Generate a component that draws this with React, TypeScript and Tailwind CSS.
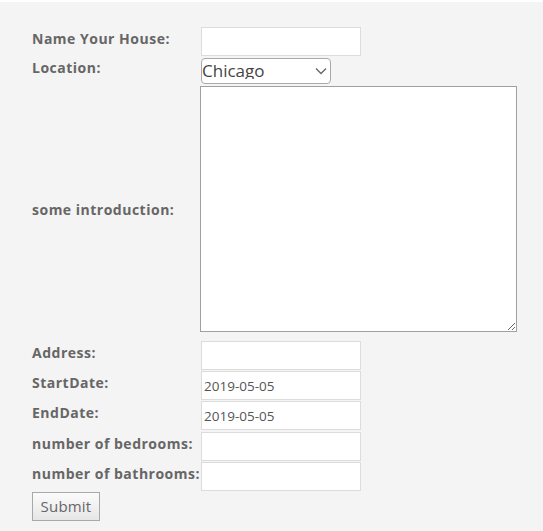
import { useState } from "react";

const labelCls =
  "w-[169px] shrink-0 whitespace-nowrap text-[14px] font-bold text-[#666] tracking-[0.5px]";
const inputCls =
  "h-[29px] w-[160px] border border-[#dcdcdc] bg-white px-[2px] text-[13.5px] text-[#555] outline-none";

function Row({
  label,
  children,
  className = "",
}: {
  label: string;
  children: React.ReactNode;
  className?: string;
}) {
  return (
    <div className={`flex items-center ${className}`}>
      <label className={`${labelCls} pb-[6px]`}>{label}</label>
      {children}
    </div>
  );
}

export default function App() {
  const [city, setCity] = useState("Chicago");

  return (
    <div className="min-h-[531px] w-full border-t-2 border-white bg-[#f4f4f4] pl-[32px] pt-[25px] font-['Open_Sans',sans-serif]">
      <form className="flex flex-col" onSubmit={(e) => e.preventDefault()}>
        <Row label="Name Your House:">
          <input type="text" className={inputCls} />
        </Row>

        {/* Location */}
        <Row label="Location:" className="mt-px">
          <div className="relative">
            <select
              value={city}
              onChange={(e) => setCity(e.target.value)}
              className="h-[26px] w-[130px] appearance-none rounded-[4px] border border-[#a9a9a9] bg-white pl-0 text-[17px] leading-none text-[#444] outline-none"
            >
              <option>Chicago</option>
              <option>New York</option>
              <option>Boston</option>
            </select>
            <svg
              className="pointer-events-none absolute right-[4px] top-[9px]"
              width="12"
              height="8"
              viewBox="0 0 12 8"
              fill="none"
            >
              <path d="M1 1.5l5 5 5-5" stroke="#666" strokeWidth="1.3" />
            </svg>
          </div>
        </Row>

        {/* Introduction */}
        <div className="mt-[2px] flex items-center">
          <label className={labelCls}>some introduction:</label>
          <textarea className="block h-[246px] w-[317px] -ml-px border border-[#a0a0a0] bg-white text-[14px] outline-none" />
        </div>

        <Row label="Address:" className="mt-[9px]">
          <input type="text" className={inputCls} />
        </Row>
        <Row label="StartDate:" className="mt-px">
          <input type="text" defaultValue="2019-05-05" className={inputCls} />
        </Row>
        <Row label="EndDate:" className="mt-px">
          <input type="text" defaultValue="2019-05-05" className={inputCls} />
        </Row>
        <Row label="number of bedrooms:" className="mt-[2px]">
          <input type="text" className={inputCls} />
        </Row>
        <Row label="number of bathrooms:" className="mt-px">
          <input type="text" className={inputCls} />
        </Row>

        <div className="mt-px">
          <button
            type="submit"
            className="h-[29px] w-[68px] border border-[#a8a8a8] bg-gradient-to-b from-[#fbfbfb] to-[#e6e6e6] text-[15px] tracking-[0.2px] text-[#666]"
          >
            Submit
          </button>
        </div>
      </form>
    </div>
  );
}
